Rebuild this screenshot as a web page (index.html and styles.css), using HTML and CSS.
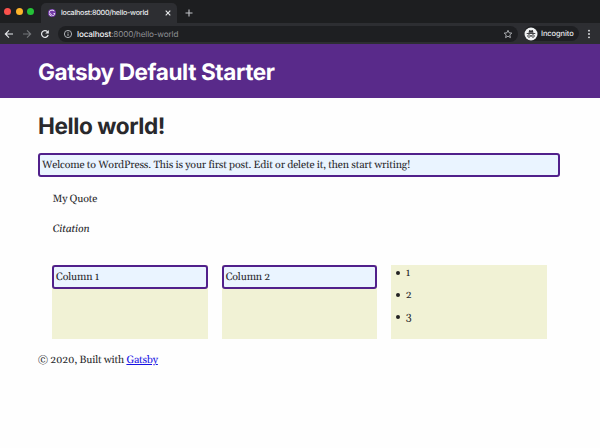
FILE: index.html
```html
<!DOCTYPE html>
<html lang="en">
<head>
<meta charset="utf-8">
<title>localhost:8000/hello-world</title>
<link rel="stylesheet" href="styles.css">
</head>
<body>
<div class="browser">
  <div class="tabs">
    <div class="lights"><i class="red"></i><i class="yellow"></i><i class="green"></i></div>
    <div class="tab">
      <svg class="favicon" viewBox="0 0 28 28"><circle cx="14" cy="14" r="14" fill="#7339a8"/><path d="M6.2 21.8C4.1 19.7 3 16.9 3 14.2L13.9 25c-2.8-.1-5.6-1.1-7.7-3.2zm10.2 2.9L3.3 11.6C4.4 6.7 8.8 3 14 3c3.7 0 6.9 1.8 8.9 4.5l-1.5 1.3C19.7 6.5 17 5 14 5c-3.900 0-7.200 2.500-8.500 6L17 22.500c2.900-1 5.100-3.500 5.800-6.500H18v-2h7c0 5.200-3.700 9.600-8.600 10.700z" fill="#fff"/></svg>
      <span class="tab-title">localhost:8000/hello-world</span>
      <svg class="close" viewBox="0 0 6 6"><path d="M.7.7l4.600 4.600M5.300.7L.7 5.300" stroke="#e8eaed" stroke-width="1.100"/></svg>
    </div>
    <svg class="plus" viewBox="0 0 8 8"><path d="M4 .5v7M.5 4h7" stroke="#c2c4c8" stroke-width="1.100"/></svg>
  </div>
  <div class="toolbar">
    <svg class="nav" viewBox="0 0 10 10"><path d="M9 5H1.500M5 1.300L1.300 5 5 8.700" fill="none" stroke="#e8eaed" stroke-width="1.100"/></svg>
    <svg class="nav" viewBox="0 0 10 10"><path d="M1 5h7.500M5 1.300L8.700 5 5 8.700" fill="none" stroke="#74767a" stroke-width="1.100"/></svg>
    <svg class="nav" viewBox="0 0 10 10"><path d="M8.200 6A3.400 3.400 0 1 1 7.500 2.700" fill="none" stroke="#e8eaed" stroke-width="1.200"/><path d="M8.800 1v3.600H5.200z" fill="#e8eaed"/></svg>
    <div class="address">
      <svg class="info" viewBox="0 0 10 10"><circle cx="5" cy="5" r="3.600" fill="none" stroke="#bdc1c6" stroke-width=".9"/><path d="M5 4.500v2.400M5 2.800v.9" stroke="#bdc1c6"/></svg>
      <span class="url"><b>localhost</b>:8000/hello-world</span>
      <svg class="star" viewBox="0 0 10 10"><path d="M5 1.300l1.100 2.500 2.700.3-2 1.800.6 2.700L5 7.200 2.600 8.600l.6-2.700-2-1.800 2.700-.3z" fill="none" stroke="#c9cbcf" stroke-width=".8"/></svg>
    </div>
    <div class="incognito">
      <svg viewBox="0 0 14 14"><circle cx="7" cy="7" r="6.500" fill="#f1f3f4"/><path d="M4.500 5.700l.7-2.600 1.800.4 1.800-.4.7 2.600z" fill="#303134"/><path d="M2.700 6.500h8.600" stroke="#303134" stroke-width=".9"/><g fill="none" stroke="#303134" stroke-width=".8"><circle cx="5" cy="9" r="1.300"/><circle cx="9" cy="9" r="1.300"/><path d="M6.300 8.800q.7-.4 1.400 0"/></g></svg>
      <span>Incognito</span>
    </div>
    <svg class="more" viewBox="0 0 4 10"><g fill="#e8eaed"><circle cx="2" cy="1.700" r=".9"/><circle cx="2" cy="5" r=".9"/><circle cx="2" cy="8.300" r=".9"/></g></svg>
  </div>
</div>
<header class="site-header"><h1>Gatsby Default Starter</h1></header>
<div class="content">
  <main>
    <h1>Hello world!</h1>
    <p class="boxed">Welcome to WordPress. This is your first post. Edit or delete it, then start writing!</p>
    <blockquote><p>My Quote</p><cite>Citation</cite></blockquote>
    <div class="columns">
      <div class="column"><p class="boxed">Column 1</p></div>
      <div class="column"><p class="boxed">Column 2</p></div>
      <div class="column"><ul><li>1</li><li>2</li><li>3</li></ul></div>
    </div>
  </main>
  <footer>© 2020, Built with <a href="#">Gatsby</a></footer>
</div>
</body>
</html>
```
FILE: styles.css
```css
* { box-sizing: border-box; }
body { margin: 0; height: 448px; overflow: hidden; background: #fefefe; color: #29292c; font: 10.6px/16px Gelasio, Georgia, "Liberation Serif", serif; letter-spacing: -.16px; text-rendering: geometricPrecision; }
h1, p, ul, blockquote { margin: 0; }
svg { display: block; flex: none; }
.browser { font-family: Inter, sans-serif; letter-spacing: 0; height: 44px; background: #2d2e32; color: #e8eaed; }
.tabs { height: 23px; display: flex; background: #1d1e20; }
.lights { display: flex; gap: 4.500px; padding: 8px 7px 0 4px; width: 41px; }
.lights i { width: 7px; height: 7px; border-radius: 50%; flex: none; }
.red { background: #fb514c; }
.yellow { background: #fdb42b; }
.green { background: #25c138; }
.tab { width: 136px; height: 20px; margin-top: 3px; padding: 0 6px 0 7px; border-radius: 5px 5px 0 0; background: #2d2e32; display: flex; align-items: center; }
.favicon { width: 8px; height: 8px; }
.tab-title { font-size: 7.200px; letter-spacing: -.25px; font-weight: 500; margin-left: 5px; white-space: nowrap; flex: 1; }
.close { width: 6px; height: 6px; }
.plus { width: 8px; height: 8px; margin: 9px 0 0 8px; }
.toolbar { height: 21px; display: flex; align-items: center; padding-left: 4px; }
.nav { width: 10px; height: 10px; margin-right: 8px; }
.address { width: 460px; height: 16px; border-radius: 8px; background: #1e1f22; display: flex; align-items: center; padding: 0 5px; }
.info { width: 10px; height: 10px; }
.url { font-size: 8.200px; letter-spacing: -.16px; color: #8f9195; margin-left: 4px; flex: 1; }
.url b { font-weight: 500; color: #f1f2f4; }
.star { width: 10px; height: 10px; }
.incognito { width: 55px; height: 15px; margin-left: 6px; border-radius: 8px; background: #1e1f22; display: flex; align-items: center; gap: 3px; font-size: 7.500px; letter-spacing: -.1px; font-weight: 500; }
.incognito svg { width: 14px; height: 14px; }
.more { width: 4px; height: 10px; margin-left: 8px; }
.site-header { height: 54px; padding: 15px 38px 0; background: #592a8a; color: #fff; }
.site-header h1, main h1 { font: 650 22.6px/28px Inter, sans-serif; letter-spacing: -.42px; }
.content { padding: 15px 40px 0 38px; }
main h1 { margin-bottom: 12px; }
.boxed { height: 24px; padding: 2px; border: 2px solid #51208b; border-radius: 3px; background: #eaf4ff; }
blockquote { margin: 14px 14.500px 0; }
blockquote p { margin-bottom: 14px; }
cite { display: block; }
.columns { display: grid; grid-template-columns: repeat(3, 1fr); gap: 14px; margin: 28px 13px 0 14px; }
.column { height: 74px; background: #f1f2d5; }
.column ul { padding-left: 4.500px; list-style: none; }
.column li { height: 22.200px; display: flex; align-items: center; padding-bottom: 6.200px; }
.column li::before { content: ""; width: 4px; height: 4px; margin-right: 6px; border-radius: 50%; background: #222; }
footer { margin-top: 13px; }
footer a { color: #1712e4; }
```
